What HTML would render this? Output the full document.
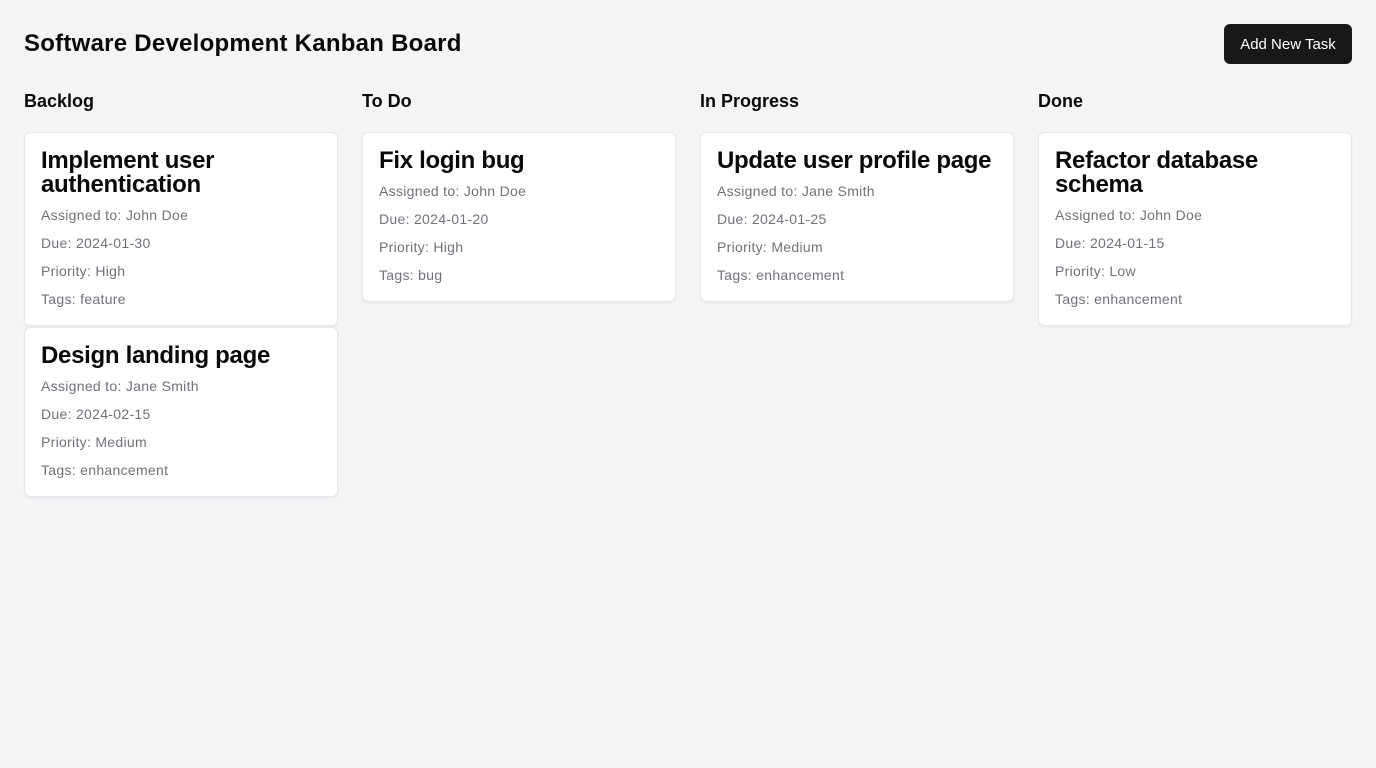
<!DOCTYPE html>
<html><head><meta charset="utf-8"><style>
*{box-sizing:border-box;margin:0;padding:0}
body{width:1376px;height:768px;background:#f3f4f6;font-family:"Liberation Sans",sans-serif;color:#0a0a0a;position:relative}
h1{position:absolute;left:24px;top:30px;font-size:24px;font-weight:700;letter-spacing:0.25px}
.btn{position:absolute;left:1224px;top:24px;width:128px;height:40px;background:#18181b;color:#fff;border-radius:6px;font-size:15px;display:flex;align-items:center;justify-content:center}
.col{position:absolute;top:90px;width:314px}
.col h2{font-size:18px;font-weight:700;height:42px;line-height:22px}
.card{background:#fff;border:1px solid #e5e7eb;border-radius:6px;box-shadow:0 1px 2px rgba(0,0,0,.06);padding:16px 16px 12px;margin-bottom:1px}
.card h3{font-size:24px;font-weight:700;line-height:24px;margin-bottom:4px;letter-spacing:-0.3px}
.card p{font-size:14px;color:#71717a;line-height:28px;letter-spacing:0.3px}
</style></head><body>
<h1>Software Development Kanban Board</h1>
<div class="btn">Add New Task</div>
<div class="col" style="left:24px"><h2>Backlog</h2>
<div class="card"><h3>Implement user authentication</h3><p>Assigned to: John Doe</p><p>Due: 2024-01-30</p><p>Priority: High</p><p>Tags: feature</p></div>
<div class="card"><h3>Design landing page</h3><p>Assigned to: Jane Smith</p><p>Due: 2024-02-15</p><p>Priority: Medium</p><p>Tags: enhancement</p></div>
</div>
<div class="col" style="left:362px"><h2>To Do</h2>
<div class="card"><h3>Fix login bug</h3><p>Assigned to: John Doe</p><p>Due: 2024-01-20</p><p>Priority: High</p><p>Tags: bug</p></div>
</div>
<div class="col" style="left:700px"><h2>In Progress</h2>
<div class="card"><h3>Update user profile page</h3><p>Assigned to: Jane Smith</p><p>Due: 2024-01-25</p><p>Priority: Medium</p><p>Tags: enhancement</p></div>
</div>
<div class="col" style="left:1038px"><h2>Done</h2>
<div class="card"><h3>Refactor database schema</h3><p>Assigned to: John Doe</p><p>Due: 2024-01-15</p><p>Priority: Low</p><p>Tags: enhancement</p></div>
</div>
</body></html>
